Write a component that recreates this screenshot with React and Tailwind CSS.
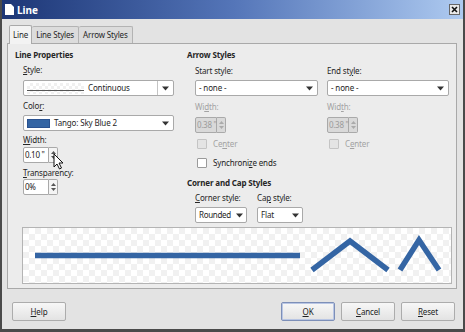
import React from "react";

const BLUE = "#3465a4";

function Caret() {
    return (
        <svg width="7" height="5" viewBox="0 0 7 5">
            <path d="M0 0.5h7L3.5 4.5z" fill="#333" />
        </svg>
    );
}

function Dropdown({ w, children, divider = false, arrow = "w-[16px]" }) {
    return (
        <div className={`flex items-center h-[16px] ${w} bg-white border border-[#a9a9a9] rounded-[2px]`}>
            <div className="flex-1 flex items-center pl-[3px] min-w-0 whitespace-nowrap leading-[12px]">{children}</div>
            <div className={`flex items-center justify-center ${arrow} h-full shrink-0 ${divider ? "border-l border-[#c4c4c4]" : ""}`}>
                <Caret />
            </div>
        </div>
    );
}

function SpinBox({ value, disabled = false, w = "w-[26px]" }) {
    return (
        <div className="flex h-[16px]">
            <div
                className={`${w} h-full border border-[#a9a9a9] rounded-l-[2px] flex items-center pl-[1px] whitespace-nowrap leading-[12px] tracking-[-0.3px] ${
                    disabled ? "bg-[#d9d9d9] text-[#9c9c9c]" : "bg-white text-[#222]"
                }`}
            >
                {value}
            </div>
            <div
                className={`w-[9px] h-full border border-l-0 border-[#a9a9a9] rounded-r-[2px] flex flex-col items-center justify-center gap-[2px] ${
                    disabled ? "bg-[#d9d9d9]" : "bg-[#f4f4f4]"
                }`}
            >
                <svg width="5" height="3" viewBox="0 0 5 3">
                    <path d="M0 3h5L2.5 0z" fill={disabled ? "#aaa" : "#555"} />
                </svg>
                <svg width="5" height="3" viewBox="0 0 5 3">
                    <path d="M0 0h5L2.5 3z" fill={disabled ? "#aaa" : "#555"} />
                </svg>
            </div>
        </div>
    );
}

function Checkbox({ label, disabled = false }) {
    return (
        <div className="flex items-center gap-[6px] h-[10px]">
            <div
                className={`w-[10px] h-[10px] rounded-[1px] border ${
                    disabled ? "border-[#c4c4c4] bg-[#e4e4e4]" : "border-[#9a9a9a] bg-white"
                }`}
            />
            <span className={`leading-[12px] ${disabled ? "text-[#a3a3a3]" : "text-[#222]"}`}>{label}</span>
        </div>
    );
}

function Button({ children, focused = false }) {
    return (
        <div
            className={`w-[54px] h-[19px] flex items-center justify-center rounded-[2px] bg-linear-to-b from-[#f7f7f7] to-[#e3e3e3] border ${
                focused ? "border-[#7d8fb8] shadow-[inset_0_0_0_1px_#b9c6e4]" : "border-[#acacac]"
            } text-[#222]`}
        >
            {children}
        </div>
    );
}

function U({ children }) {
    return <span className="underline underline-offset-[1px]">{children}</span>;
}

function Preview() {
    return (
        <svg width="428" height="55" viewBox="0 0 428 55" className="block">
            <defs>
                <pattern id="chk" width="12" height="12" patternUnits="userSpaceOnUse">
                    <rect width="12" height="12" fill="#ffffff" />
                    <rect width="6" height="6" fill="#f1f1f1" />
                    <rect x="6" y="6" width="6" height="6" fill="#f1f1f1" />
                </pattern>
            </defs>
            <rect width="428" height="55" fill="url(#chk)" />
            <line x1="12" y1="27.5" x2="277" y2="27.5" stroke={BLUE} strokeWidth="5.5" />
            <polyline points="289,42 327,13 365,42" fill="none" stroke={BLUE} strokeWidth="5.5" />
            <polyline points="377,42 396,12 416,42" fill="none" stroke={BLUE} strokeWidth="5.5" />
        </svg>
    );
}

export default function App() {
    return (
        <div
            className="relative w-[465px] h-[332px] flex flex-col bg-[#e3e3e3] border-x-[2px] border-b-[3px] border-[#4a4a4a] overflow-hidden text-[8px] leading-none tracking-[-0.15px] text-[#262626]"
            style={{ fontFamily: '"Noto Sans", "Open Sans", sans-serif' }}
        >
            {/* title bar */}
            <div className="h-[19px] shrink-0 flex items-center bg-linear-to-r from-[#1d3676] via-[#5475b8] to-[#aecaf0] px-[3px]">
                <svg width="9" height="11" viewBox="0 0 9 11" className="mr-[3px]">
                    <path d="M0 0h6l3 3v8H0z" fill="#fff" />
                </svg>
                <span className="text-white font-bold text-[10px] tracking-normal">Line</span>
                <div className="ml-auto w-[11px] h-[11px] bg-[#e8e8e8] border border-[#666] flex items-center justify-center">
                    <svg width="7" height="7" viewBox="0 0 7 7">
                        <path d="M1 1l5 5M6 1l-5 5" stroke="#111" strokeWidth="1.6" />
                    </svg>
                </div>
            </div>

            <div className="flex-1 flex flex-col pl-[5px] pr-[6px] pt-[6px]">
                {/* tabs */}
                <div className="flex h-[18px] pl-[2px] shrink-0">
                    <div className="px-[3px] flex items-center bg-[#f3f3f3] border border-b-0 border-[#a9a9a9] rounded-t-[2px] relative z-10 h-[19px]">
                        Line
                    </div>
                    <div className="px-[4px] flex items-center bg-[#dcdcdc] border border-l-0 border-b-0 border-[#b3b3b3] rounded-t-[2px] mt-[1px]">
                        Line Styles
                    </div>
                    <div className="px-[4px] flex items-center bg-[#dcdcdc] border border-l-0 border-b-0 border-[#b3b3b3] rounded-t-[2px] mt-[1px]">
                        Arrow Styles
                    </div>
                </div>

                {/* tab panel */}
                <div className="h-[246px] shrink-0 border border-[#a9a9a9] bg-[#ececec] flex flex-col pl-[7px] pt-[7px]">
                    <div className="flex">
                        {/* left column */}
                        <div className="w-[172px] shrink-0 flex flex-col">
                            <div className="font-bold">Line Properties</div>
                            <div className="pl-[8px] flex flex-col">
                                <div className="mt-[7px]">
                                    <U>S</U>tyle:
                                </div>
                                <div className="mt-[6px]">
                                    <Dropdown w="w-[151px]" divider>
                                        <div className="w-[57px] h-[11px] shrink-0 relative bg-[repeating-conic-gradient(#f0f0f0_0_25%,#ffffff_0_50%)] bg-[length:6px_6px]">
                                            <div className="absolute left-0 right-0 bottom-[3px] h-px bg-[#555]" />
                                        </div>
                                        <span className="ml-[4px]">Continuous</span>
                                    </Dropdown>
                                </div>
                                <div className="mt-[6px]">
                                    Colo<U>r</U>:
                                </div>
                                <div className="mt-[5px]">
                                    <Dropdown w="w-[151px]">
                                        <div className="w-[23px] h-[9px] shrink-0 bg-[#3465a4] border border-[#2a5290]" />
                                        <span className="ml-[4px]">Tango: Sky Blue 2</span>
                                    </Dropdown>
                                </div>
                                <div className="mt-[5px]">
                                    <U>W</U>idth:
                                </div>
                                <div className="mt-[3px]">
                                    <SpinBox value={'0.10 "'} />
                                </div>
                                <div className="mt-[6px]">
                                    <U>T</U>ransparency:
                                </div>
                                <div className="mt-[2px]">
                                    <SpinBox value="0%" />
                                </div>
                            </div>
                        </div>

                        {/* right column */}
                        <div className="w-[262px] shrink-0 flex flex-col">
                            <div className="font-bold">Arrow Styles</div>
                            <div className="flex gap-[9px] pl-[8px] mt-[8px]">
                                <div className="flex flex-col">
                                    <div>Start style:</div>
                                    <div className="mt-[5px]">
                                        <Dropdown w="w-[123px]">
                                            <span>- none -</span>
                                        </Dropdown>
                                    </div>
                                    <div className="mt-[7px] text-[#a3a3a3]">
                                        Wi<U>d</U>th:
                                    </div>
                                    <div className="mt-[6px]">
                                        <SpinBox value={'0.38 "'} w="w-[22px]" disabled />
                                    </div>
                                    <div className="mt-[6px] pl-[2px]">
                                        <Checkbox label={<>Ce<U>n</U>ter</>} disabled />
                                    </div>
                                </div>
                                <div className="flex flex-col">
                                    <div>
                                        End st<U>y</U>le:
                                    </div>
                                    <div className="mt-[5px]">
                                        <Dropdown w="w-[122px]">
                                            <span>- none -</span>
                                        </Dropdown>
                                    </div>
                                    <div className="mt-[7px] text-[#a3a3a3]">
                                        Wid<U>t</U>h:
                                    </div>
                                    <div className="mt-[6px]">
                                        <SpinBox value={'0.38 "'} w="w-[22px]" disabled />
                                    </div>
                                    <div className="mt-[6px] pl-[2px]">
                                        <Checkbox label={<>C<U>e</U>nter</>} disabled />
                                    </div>
                                </div>
                            </div>
                            <div className="mt-[9px] pl-[10px]">
                                <Checkbox label={<>Synchroni<U>z</U>e ends</>} />
                            </div>
                            <div className="font-bold mt-[11px]">Corner and Cap Styles</div>
                            <div className="flex gap-[10px] pl-[8px] mt-[7px]">
                                <div className="flex flex-col">
                                    <div>
                                        <U>C</U>orner style:
                                    </div>
                                    <div className="mt-[5px]">
                                        <Dropdown w="w-[52px]" arrow="w-[13px]">
                                            <span className="tracking-[-0.3px]">Rounded</span>
                                        </Dropdown>
                                    </div>
                                </div>
                                <div className="flex flex-col">
                                    <div>
                                        Ca<U>p</U> style:
                                    </div>
                                    <div className="mt-[5px]">
                                        <Dropdown w="w-[46px]" arrow="w-[14px]">
                                            <span>Flat</span>
                                        </Dropdown>
                                    </div>
                                </div>
                            </div>
                        </div>
                    </div>

                    {/* preview */}
                    <div className="mt-[4px] ml-[7px] w-[430px] border border-[#b4b4b4] bg-white">
                        <Preview />
                    </div>
                </div>

                {/* buttons */}
                <div className="flex items-center mt-[13px] pl-[5px] pr-[2px]">
                    <Button>
                        <U>H</U>elp
                    </Button>
                    <div className="ml-auto flex gap-[6px]">
                        <Button focused>
                            <U>O</U>K
                        </Button>
                        <Button>
                            <U>C</U>ancel
                        </Button>
                        <Button>
                            <U>R</U>eset
                        </Button>
                    </div>
                </div>
            </div>

            {/* mouse pointer */}
            <svg width="11" height="17" viewBox="0 0 11 17" className="absolute left-[51px] top-[153px]">
                <path d="M1 1v13l3-3 2.5 5 2-1-2.5-5h4z" fill="#fff" stroke="#111" strokeWidth="1" strokeLinejoin="round" />
            </svg>
        </div>
    );
}
